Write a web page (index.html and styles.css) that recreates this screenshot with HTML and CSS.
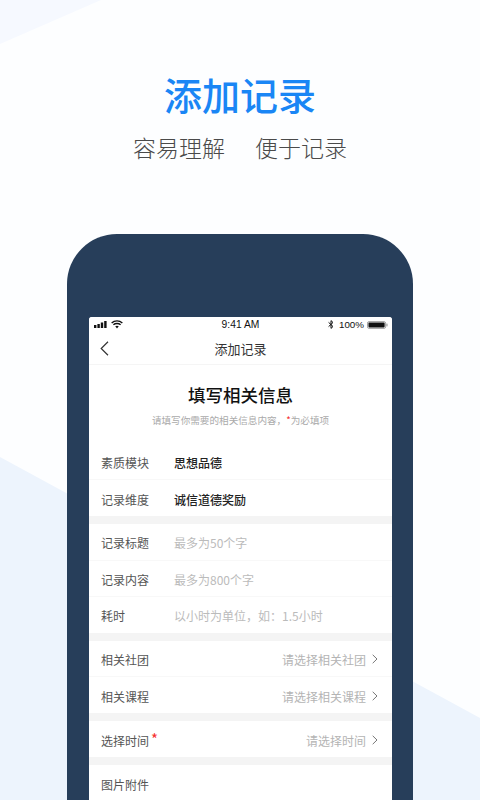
FILE: index.html
```html
<!DOCTYPE html>
<html lang="zh">
<head>
<meta charset="utf-8">
<title>添加记录</title>
<link rel="stylesheet" href="styles.css">
</head>
<body>
<div class="poster">
  <svg class="backdrop" width="480" height="800" viewBox="0 0 480 800" aria-hidden="true">
    <polygon points="0,0 101,0 0,44" fill="#f6f9ff"/>
    <polygon points="0,457 480,718 480,800 0,800" fill="#edf4fd"/>
  </svg>
  <header class="hero">
    <h1 class="hero-title">添加记录</h1>
    <p class="hero-sub"><span>容易理解</span><span>便于记录</span></p>
  </header>
  <div class="phone">
    <div class="screen">
      <div class="status">
        <div class="status-left">
          <svg width="14" height="7" viewBox="0 0 14 7"><rect x="0" y="4" width="2.4" height="3" fill="#111"/><rect x="3.4" y="3" width="2.4" height="4" fill="#111"/><rect x="6.8" y="1.5" width="2.4" height="5.5" fill="#111"/><rect x="10.2" y="0" width="2.4" height="7" fill="#111"/></svg>
          <svg width="12" height="9" viewBox="0 0 11 8"><path d="M0.6 2.6C3.4 0 7.6 0 10.4 2.6M2.2 4.3C4 2.7 7 2.7 8.8 4.3" fill="none" stroke="#111" stroke-width="1.3"/><path d="M3.9 5.7C4.9 4.9 6.1 4.9 7.1 5.7L5.5 7.6Z" fill="#111"/></svg>
        </div>
        <span class="status-time">9:41 AM</span>
        <div class="status-right">
          <svg class="status-bt" width="6" height="9" viewBox="0 0 6 9"><path d="M0.6 2.4L5 6.5L3 8.4V0.6L5 2.5L0.6 6.6" fill="none" stroke="#111" stroke-width="1"/></svg>
          <span class="status-batt-text">100%</span>
          <svg width="21" height="8" viewBox="0 0 22 8"><rect x="0.5" y="0.5" width="19" height="7" rx="1.6" fill="none" stroke="#999"/><rect x="1.5" y="1.5" width="17" height="5" rx="0.8" fill="#111"/><rect x="20.3" y="2.6" width="1.2" height="2.8" fill="#999"/></svg>
        </div>
      </div>
      <nav class="nav">
        <svg class="nav-back" width="9" height="15" viewBox="0 0 9 15"><path d="M8 0.8L1.2 7.5L8 14.2" fill="none" stroke="#333" stroke-width="1.2"/></svg>
        <span class="nav-title">添加记录</span>
      </nav>
      <section class="intro">
        <h2 class="intro-title">填写相关信息</h2>
        <p class="intro-sub">请填写你需要的相关信息内容，<em class="req">*</em>为必填项</p>
      </section>
      <div class="group">
        <div class="row"><span class="label">素质模块</span><span class="value">思想品德</span></div>
        <div class="row"><span class="label">记录维度</span><span class="value">诚信道德奖励</span></div>
      </div>
      <div class="group">
        <div class="row"><span class="label">记录标题</span><span class="hint">最多为50个字</span></div>
        <div class="row"><span class="label">记录内容</span><span class="hint">最多为800个字</span></div>
        <div class="row"><span class="label">耗时</span><span class="hint">以小时为单位，如：1.5小时</span></div>
      </div>
      <div class="group">
        <div class="row"><span class="label">相关社团</span><span class="pick">请选择相关社团<svg class="chev" width="6" height="10" viewBox="0 0 6 10"><path d="M0.7 0.8L5 5L0.7 9.2" fill="none" stroke="#777" stroke-width="1"/></svg></span></div>
        <div class="row"><span class="label">相关课程</span><span class="pick">请选择相关课程<svg class="chev" width="6" height="10" viewBox="0 0 6 10"><path d="M0.7 0.8L5 5L0.7 9.2" fill="none" stroke="#777" stroke-width="1"/></svg></span></div>
      </div>
      <div class="group">
        <div class="row"><span class="label">选择时间<em class="req req-label">*</em></span><span class="pick">请选择时间<svg class="chev" width="6" height="10" viewBox="0 0 6 10"><path d="M0.7 0.8L5 5L0.7 9.2" fill="none" stroke="#777" stroke-width="1"/></svg></span></div>
      </div>
      <div class="group">
        <div class="row"><span class="label">图片附件</span></div>
      </div>
    </div>
  </div>
</div>
</body>
</html>
```
FILE: styles.css
```css
* { box-sizing: border-box; }
html, body { margin: 0; padding: 0; }
body {
  width: 480px;
  height: 800px;
  overflow: hidden;
  font-family: "Noto Sans CJK SC", "Liberation Sans", sans-serif;
  background: #fdfeff;
}
.poster {
  position: relative;
  width: 480px;
  height: 800px;
  overflow: hidden;
  padding-top: 69px;
}
.backdrop { position: absolute; left: 0; top: 0; }
.hero { position: relative; text-align: center; }
.hero-title {
  margin: 0;
  font-size: 38px;
  line-height: 50px;
  font-weight: 500;
  color: #1a86f5;
}
.hero-sub {
  margin: 3px 0 0;
  display: flex;
  justify-content: center;
  gap: 30px;
  font-size: 23px;
  line-height: 50px;
  font-weight: 300;
  color: #4a4a4a;
}
.phone {
  position: relative;
  width: 346px;
  height: 600px;
  margin: 62px 0 0 67px;
  padding: 83px 21px 0 22px;
  background: #273e5a;
  border-radius: 50px 50px 0 0;
}
.screen {
  background: #f4f4f4;
  border-radius: 3px 3px 0 0;
  height: 500px;
  overflow: hidden;
}
.status {
  height: 17px;
  background: #fff;
  display: flex;
  align-items: center;
  justify-content: space-between;
  padding: 0 4px 2px 5px;
  position: relative;
  font-family: "Liberation Sans", sans-serif;
  font-size: 10.3px;
  color: #111;
}
.status-left, .status-right { display: flex; align-items: center; gap: 3px; position: relative; z-index: 1; }
.status-bt { margin-right: 2px; }
.status-batt-text { font-size: 9.8px; }
.status-time { position: absolute; left: 0; right: 0; text-align: center; }
.nav {
  height: 31px;
  background: #fff;
  border-bottom: 1px solid #f5f5f5;
  display: flex;
  align-items: center;
  justify-content: center;
  position: relative;
  padding-bottom: 1px;
}
.nav-back { position: absolute; left: 11px; top: 7px; }
.nav-title { font-size: 13px; color: #333; }
.intro {
  background: #fff;
  text-align: center;
  height: 79px;
  padding-top: 17px;
}
.intro-title {
  margin: 0;
  font-size: 17.5px;
  line-height: 26px;
  font-weight: 500;
  color: #111;
}
.intro-sub {
  margin: 0;
  font-size: 9.6px;
  line-height: 24px;
  color: #aaa;
}
.req { color: #f5302e; font-style: normal; }
.req-label { position: absolute; left: 50px; top: -1px; font-size: 15px; line-height: 16px; }
.group { background: #fff; margin-bottom: 8px; }
.row {
  height: 36.25px;
  display: flex;
  align-items: center;
  padding: 2px 14px 0 12px;
  font-size: 12px;
  border-bottom: 1px solid #f8f8f8;
}
.row:last-child { border-bottom: 0; height: 36px; }
.label { width: 73px; flex: none; color: #555; position: relative; }
.value { color: #222; font-weight: 500; }
.hint { color: #bbb; }
.pick {
  margin-left: auto;
  color: #b4b4b4;
  display: flex;
  align-items: center;
  gap: 6px;
}
```
